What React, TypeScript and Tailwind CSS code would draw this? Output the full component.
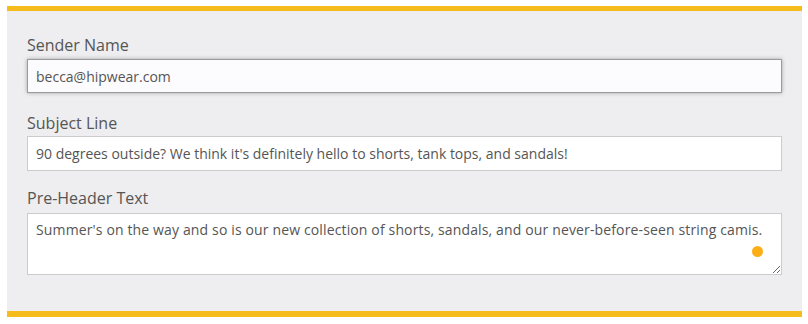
import React from "react";

const fieldFont = { fontFamily: '"Open Sans", "Lato", sans-serif' };

export default function App() {
    return (
        <div className="w-[808px] h-[324px] bg-white pt-[6px]" style={fieldFont}>
            <div className="mx-[7px] w-[795px] border-t-[5px] border-b-[6px] border-[#f5bc1c] bg-[#eeedef] px-5 pt-[22px] pb-[36px] text-[#4a4a4a]">
                <label className="block text-[16px] leading-6 mb-[2px] text-[#555]">Sender Name</label>
                <input
                    readOnly
                    value="becca@hipwear.com"
                    className="block w-[755px] h-[34px] px-2 text-[14px] bg-[#fcfbfd] border border-[#9a9a9a] shadow-[0_0_4px_rgba(0,0,0,0.3)] outline-none text-[#555]"
                />
                <label className="block text-[16px] leading-6 mt-[18px] mb-[1px] text-[#555]">Subject Line</label>
                <input
                    readOnly
                    value="90 degrees outside? We think it's definitely hello to shorts, tank tops, and sandals!"
                    className="block w-[755px] h-[35px] px-2 text-[14px] bg-white border border-[#cccccc] outline-none text-[#555]"
                />
                <label className="block text-[16px] leading-6 mt-[15px] mb-[3px] text-[#555]">Pre-Header Text</label>
                <div className="relative w-[755px]">
                    <textarea
                        readOnly
                        value="Summer's on the way and so is our new collection of shorts, sandals, and our never-before-seen string camis."
                        className="block w-[755px] h-[62px] px-2 pt-[6px] text-[14px] leading-5 tracking-[0.14px] bg-white border border-[#cccccc] outline-none resize text-[#555]"
                    />
                    <span className="absolute right-[19px] top-[33px] w-[11px] h-[11px] rounded-full bg-[#fcae16]" />
                </div>
            </div>
        </div>
    );
}
